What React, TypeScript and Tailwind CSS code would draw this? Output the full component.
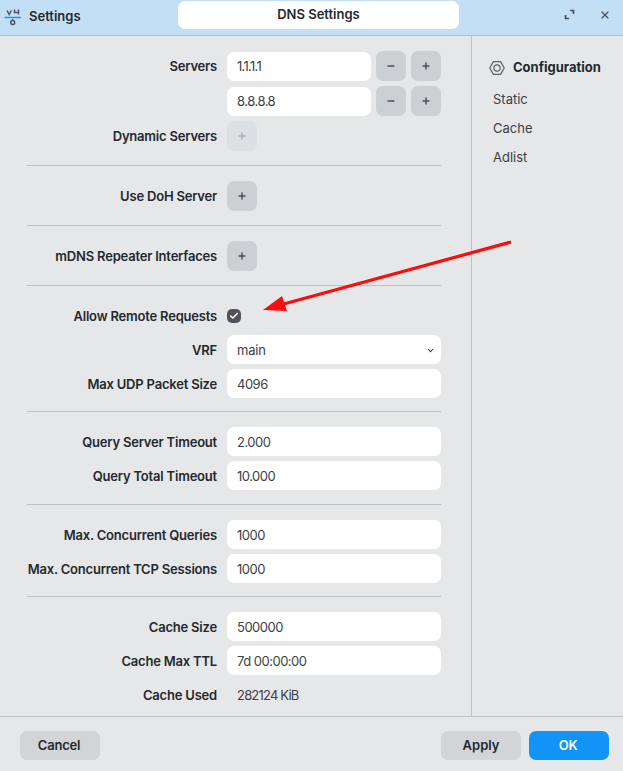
import React from 'react';
import { ChevronDown, Check, Minus, Plus, X } from 'lucide-react';

const Label: React.FC<{ children?: React.ReactNode }> = ({ children }) => (
  <div className="w-[217px] shrink-0 pt-[2px] text-right text-[13px] font-semibold tracking-[-0.2px] text-[#24292f] whitespace-nowrap">{children}</div>
);

const Row: React.FC<{ label?: string; children: React.ReactNode }> = ({ label, children }) => (
  <div className="flex items-center gap-[10px]">
    <Label>{label}</Label>
    {children}
  </div>
);

const Field: React.FC<{ value: string; width?: string; tight?: boolean }> = ({ value, width = 'w-[214px]', tight }) => (
  <div className={`${width} h-[29px] rounded-[7px] bg-white pl-[10px] pt-[2px] flex items-center text-[13px] text-[#3c4146] ${tight ? 'tracking-[-0.7px]' : 'tracking-[-0.5px]'}`}>{value}</div>
);

const IconButton: React.FC<{ kind: 'plus' | 'minus'; disabled?: boolean }> = ({ kind, disabled }) => (
  <div className={`w-[30px] h-[30px] rounded-[7px] flex items-center justify-center ${disabled ? 'bg-[#dde0e2] text-[#a9aeb2]' : 'bg-[#cdd0d3] text-[#4a5058]'}`}>
    {kind === 'plus' ? <Plus size={10} strokeWidth={3.5} /> : <Minus size={10} strokeWidth={3.5} />}
  </div>
);

const Divider = () => <div className="ml-[27px] w-[414px] h-px bg-[#bfc2c4]" />;

const App: React.FC = () => {
  return (
    <div className="relative w-[623px] h-[771px] bg-[#e6e7e9] flex flex-col overflow-hidden" style={{ fontFamily: 'Inter, sans-serif' }}>
      {/* Title bar */}
      <div className="h-[36px] shrink-0 bg-[#c3dff5] border-b border-[#b5c3cf] flex items-center">
        <div className="w-[178px] -mt-[2px] flex items-center pl-[4px] gap-[7px]">
          <svg width="18" height="18" viewBox="0 0 18 18" fill="none">
            <path d="M3 2.5 L5.2 6.5 L7.4 2.5" stroke="#4a5560" strokeWidth="1.5" />
            <path d="M10.5 1.5 V4.5 H14.5 M14.5 1.5 V6.5" stroke="#4a5560" strokeWidth="1.5" />
            <path d="M0.5 9.5 H17" stroke="#1d94ef" strokeWidth="1.5" />
            <circle cx="8.7" cy="14.5" r="2" stroke="#4a5560" strokeWidth="1.5" />
            <path d="M8.7 11 V13" stroke="#4a5560" strokeWidth="1.2" />
          </svg>
          <span className="text-[13px] font-semibold text-[#24292f]">Settings</span>
        </div>
        <div className="w-[281px] h-[28px] -mt-[5px] bg-white rounded-[7px] flex items-center justify-center text-[13px] font-semibold text-[#24292f]">DNS Settings</div>
        <div className="flex-1 flex items-center pl-[105px] gap-[24px] -mt-[6px] text-[#4a5058]">
          <svg width="11" height="11" viewBox="0 0 11 11" fill="none" stroke="currentColor" strokeWidth="1.7">
            <path d="M6 1.5 H9.5 V5 M1.5 6 V9.5 H5" />
          </svg>
          <X size={12} strokeWidth={2.6} />
        </div>
      </div>

      {/* Body */}
      <div className="flex-1 flex min-h-0">
        <div className="w-[471px] shrink-0 pt-[15px]">
          <div className="flex flex-col gap-[5px]">
            <div className="flex items-center gap-[10px]">
              <Label>Servers</Label>
              <Field value="1.1.1.1" width="w-[144px]" tight />
              <div className="flex gap-[5px] -ml-[5px]">
                <IconButton kind="minus" />
                <IconButton kind="plus" />
              </div>
            </div>
            <div className="flex items-center gap-[10px]">
              <Label />
              <Field value="8.8.8.8" width="w-[144px]" />
              <div className="flex gap-[5px] -ml-[5px]">
                <IconButton kind="minus" />
                <IconButton kind="plus" />
              </div>
            </div>
            <Row label="Dynamic Servers"><IconButton kind="plus" disabled /></Row>
          </div>
          <div className="mt-[14px]"><Divider /></div>
          <div className="mt-[15px]"><Row label="Use DoH Server"><IconButton kind="plus" /></Row></div>
          <div className="mt-[14px]"><Divider /></div>
          <div className="mt-[15px]"><Row label="mDNS Repeater Interfaces"><IconButton kind="plus" /></Row></div>
          <div className="mt-[14px]"><Divider /></div>

          <div className="mt-[15px] flex flex-col gap-[5px]">
            <div className="h-[29px] flex items-center gap-[10px]">
              <Label>Allow Remote Requests</Label>
              <div className="w-[14px] h-[14px] mt-[1px] rounded-[5px] bg-[#4f545c] flex items-center justify-center text-white">
                <Check size={10} strokeWidth={3.5} />
              </div>
            </div>
            <div className="flex items-center gap-[10px]">
              <Label>VRF</Label>
              <div className="w-[214px] h-[29px] rounded-[7px] bg-white pl-[10px] pr-[6px] pt-[2px] flex items-center justify-between text-[13px] tracking-[-0.2px] text-[#3c4146]">
                main
                <ChevronDown size={9} strokeWidth={3} />
              </div>
            </div>
            <Row label="Max UDP Packet Size"><Field value="4096" /></Row>
          </div>
          <div className="mt-[13px]"><Divider /></div>

          <div className="mt-[15px] flex flex-col gap-[5px]">
            <Row label="Query Server Timeout"><Field value="2.000" /></Row>
            <Row label="Query Total Timeout"><Field value="10.000" /></Row>
          </div>
          <div className="mt-[14px]"><Divider /></div>

          <div className="mt-[15px] flex flex-col gap-[5px]">
            <Row label="Max. Concurrent Queries"><Field value="1000" /></Row>
            <Row label="Max. Concurrent TCP Sessions"><Field value="1000" /></Row>
          </div>
          <div className="mt-[13px]"><Divider /></div>

          <div className="mt-[15px] flex flex-col gap-[5px]">
            <Row label="Cache Size"><Field value="500000" /></Row>
            <Row label="Cache Max TTL"><Field value="7d 00:00:00" /></Row>
            <div className="h-[29px] flex items-center gap-[10px]">
              <Label>Cache Used</Label>
              <span className="pl-[10px] pt-[2px] text-[13px] tracking-[-0.8px] text-[#3c4146]">282124 KiB</span>
            </div>
          </div>
        </div>

        {/* Sidebar */}
        <div className="flex-1 border-l border-[#bfc2c4] pl-[17px] pt-[23px]">
          <div className="flex items-center gap-[8px] h-[18px]">
            <svg width="16" height="16" viewBox="0 0 16 16" fill="none" stroke="#5a6066" strokeWidth="1.2">
              <path d="M4.4 1.7 H11.6 L15.2 8 L11.6 14.3 H4.4 L0.8 8 Z" />
              <circle cx="8" cy="8" r="3.2" />
            </svg>
            <span className="text-[13px] font-bold text-[#24292f]">Configuration</span>
          </div>
          <div className="mt-[13px] ml-[4px] flex flex-col gap-[11px] text-[13px] leading-[18px] text-[#3c4146]">
            <div>Static</div>
            <div>Cache</div>
            <div>Adlist</div>
          </div>
        </div>
      </div>

      {/* Footer */}
      <div className="h-[55px] shrink-0 border-t border-[#bfc2c4] flex items-start pt-[14px] pl-[20px] pr-[14px]">
        <div className="w-[80px] h-[29px] rounded-[7px] bg-[#d2d4d6] flex items-center justify-center pr-[2px] text-[13px] font-semibold tracking-[-0.2px] text-[#24292f]">Cancel</div>
        <div className="ml-auto flex gap-[8px]">
          <div className="w-[80px] h-[29px] rounded-[7px] bg-[#d2d4d6] flex items-center justify-center text-[13px] font-semibold text-[#24292f]">Apply</div>
          <div className="w-[80px] h-[29px] rounded-[7px] bg-[#1194f6] flex items-center justify-center pr-[2px] text-[13px] font-semibold tracking-[-0.2px] text-white">OK</div>
        </div>
      </div>

      {/* Red annotation arrow */}
      <svg className="absolute left-0 top-0 pointer-events-none" width="623" height="771" fill="none">
        <path d="M511 242 L280 305" stroke="#fb0d0d" strokeWidth="3.2" />
        <path d="M263 310 L282 296 L287 311 Z" fill="#fb0d0d" />
      </svg>
    </div>
  );
};

export default App;
